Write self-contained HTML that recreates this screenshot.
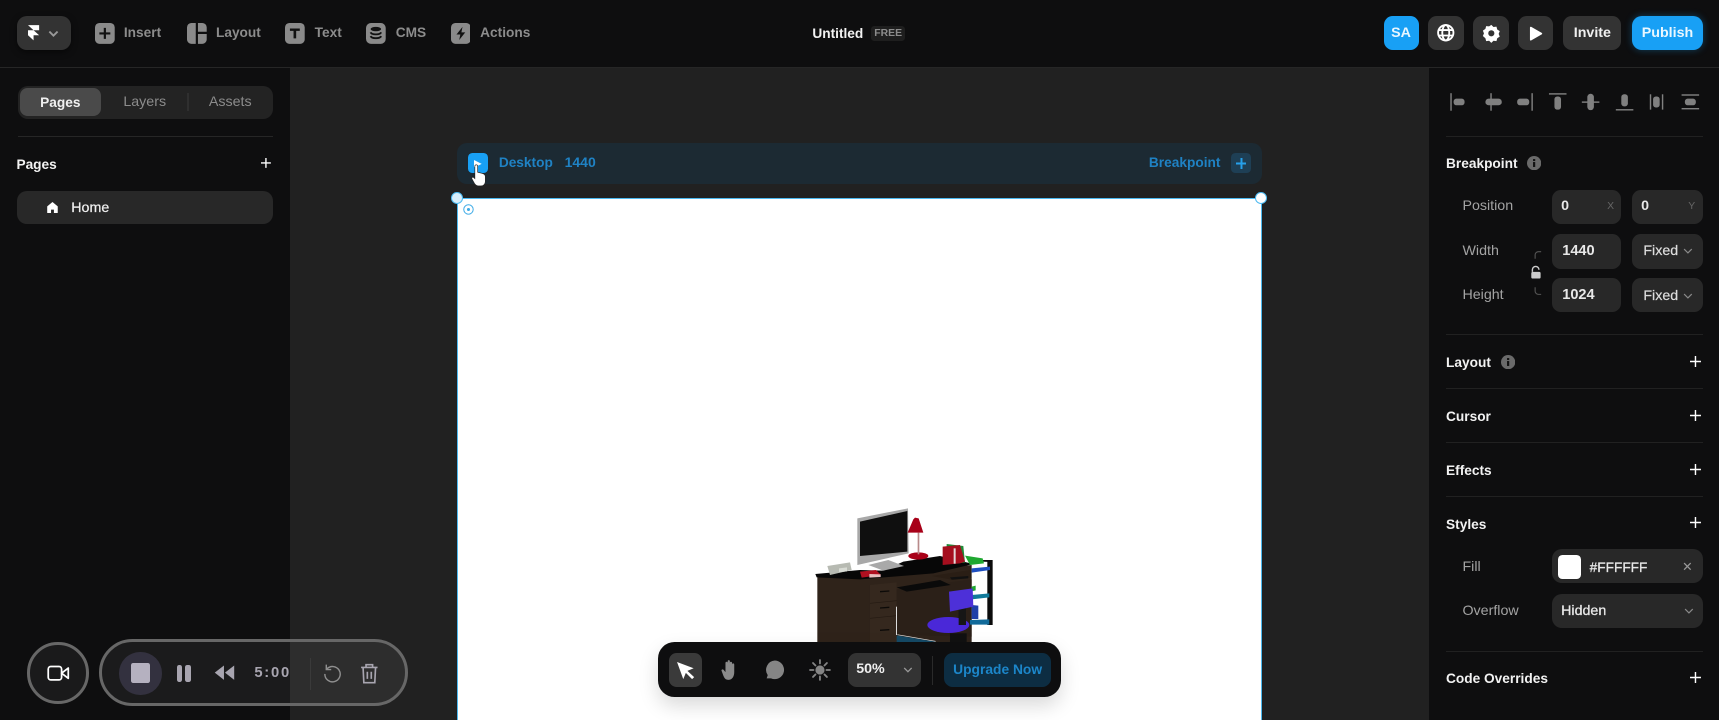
<!DOCTYPE html>
<html lang="en"><head><meta charset="utf-8"><title>Untitled</title>
<style>
html,body{margin:0;padding:0;width:1719px;height:720px;overflow:hidden;background:#0e0e0f}
#w{position:absolute;left:0;top:0;width:1568px;height:657px;overflow:hidden;zoom:1.09630;font-family:"Liberation Sans",sans-serif;background:#0e0e0f}
#w div,#w svg,#w span.t{position:absolute}
.t{height:20px;line-height:20px;font-size:13px;white-space:nowrap;display:block}
.g{color:#8c8c8c;font-weight:700;font-size:12.5px}
.h{color:#f2f2f2;font-weight:700;font-size:12.5px;margin-top:1.500px}
.l{color:#a3a3a3;font-size:13px;margin-top:1px}
.v{color:#e8e8e8;font-weight:700;font-size:13px;margin-top:1px}
.in{background:#282828;border-radius:8px}
.line{background:#212121;height:1px;left:1319px;width:234px}
.btn{background:#333;border-radius:8px}
</style></head><body>
<div id="w">
<!-- canvas -->
<div style="left:264.600px;top:62px;width:1039px;height:595px;background:#212121"></div>
<!-- top -->
<div style="left:0;top:61px;width:1568px;height:1px;background:#262626"></div>

<div style="left:15.500px;top:15px;width:49.500px;height:31px;background:#333;border-radius:9px;box-shadow:0 2px 6px rgba(0,0,0,.5)"></div>
<svg style="left:25px;top:22px" width="12" height="16" viewBox="0 0 13 17"><path d="M1 1h11v5H6.500zM1 6h5.500l5.500 5H6.500v5L1 11z" fill="#fff"/></svg>
<svg style="left:44px;top:27.500px" width="10" height="7" viewBox="0 0 12 8"><path d="M1.500 1.500L6 6l4.500-4.500" stroke="#999" stroke-width="2" fill="none"/></svg>

<svg style="left:87px;top:21px" width="18" height="19" viewBox="0 0 18 19"><rect width="18" height="19" rx="4" fill="#8a8a8a"/><path d="M9 4.500v10M4 9.500h10" stroke="#111" stroke-width="2"/></svg>
<span class="t g" style="left:113px;top:20px">Insert</span>
<svg style="left:171px;top:21px" width="18" height="19" viewBox="0 0 18 19"><path d="M4 0h4v19H4a4 4 0 0 1-4-4V4a4 4 0 0 1 4-4zM10 0h4a4 4 0 0 1 4 4v4h-8zM10 10h8v5a4 4 0 0 1-4 4h-4z" fill="#8a8a8a"/></svg>
<span class="t g" style="left:197px;top:20px">Layout</span>
<svg style="left:260px;top:21px" width="18" height="19" viewBox="0 0 18 19"><rect width="18" height="19" rx="4" fill="#8a8a8a"/><path d="M4.500 5h9v2.200h-3.300V14H7.800V7.200H4.500z" fill="#111"/></svg>
<span class="t g" style="left:287px;top:20px">Text</span>
<svg style="left:334px;top:21px" width="18" height="19" viewBox="0 0 18 19"><rect width="18" height="19" rx="4.500" fill="#8a8a8a"/><ellipse cx="9" cy="5.500" rx="4.800" ry="2" fill="#111"/><path d="M4.200 8.500c1 2.500 8.600 2.500 9.600 0M4.200 12c1 2.500 8.600 2.500 9.600 0" stroke="#111" stroke-width="1.700" fill="none"/></svg>
<span class="t g" style="left:361px;top:20px">CMS</span>
<svg style="left:411px;top:21px" width="18" height="19" viewBox="0 0 18 19"><rect width="18" height="19" rx="4" fill="#8a8a8a"/><path d="M10.500 3.500L5 10.500h3.500l-1 5 5.500-7H9.500z" fill="#111"/></svg>
<span class="t g" style="left:438px;top:20px">Actions</span>

<span class="t" style="left:741px;top:21px;color:#f2f2f2;font-weight:700;font-size:12.5px">Untitled</span>
<div style="left:794.500px;top:23.500px;width:31px;height:14px;background:#1e1e1e;border-radius:3px"></div>
<span class="t" style="left:797.500px;top:21px;color:#8c8c8c;font-weight:700;font-size:9.500px">FREE</span>

<div style="left:1262px;top:15px;width:32px;height:31px;background:#18a0f5;border-radius:8px"></div>
<span class="t" style="left:1262px;top:21px;width:32px;text-align:center;color:#e9f6ff;font-weight:700;font-size:13px">SA</span>
<div class="btn" style="left:1303px;top:15px;width:32px;height:31px"></div>
<svg style="left:1311px;top:22px" width="16" height="16" viewBox="0 0 16 16" fill="none" stroke="#fff" stroke-width="1.700"><circle cx="8" cy="8" r="7"/><ellipse cx="8" cy="8" rx="3.200" ry="7"/><path d="M1 5.500h14M1 10.500h14"/></svg>
<div class="btn" style="left:1344px;top:15px;width:32px;height:31px"></div>
<svg style="left:1351.500px;top:22px" width="17" height="17" viewBox="0 0 17 17"><path d="M8.500.8l2 1.900 2.700-.3.700 2.600 2.300 1.500-1 2.500 1 2.500-2.300 1.500-.7 2.600-2.700-.3-2 1.900-2-1.900-2.700.3-.7-2.600L.8 11l1-2.500-1-2.500 2.300-1.500.7-2.600 2.700.3z" fill="#fff"/><circle cx="8.500" cy="8.500" r="2.800" fill="#333"/></svg>
<div class="btn" style="left:1385px;top:15px;width:32px;height:31px"></div>
<svg style="left:1395px;top:23.500px" width="13" height="14" viewBox="0 0 15 15"><path d="M1 1.200c0-.8.700-1.200 1.400-.8l11 6.300c.7.400.7 1.200 0 1.600l-11 6.300c-.7.400-1.400 0-1.400-.8z" fill="#fff"/></svg>
<div class="btn" style="left:1426px;top:15px;width:53px;height:31px"></div>
<span class="t" style="left:1426px;top:21px;width:53px;text-align:center;color:#f0f0f0;font-weight:700;font-size:13px">Invite</span>
<div style="left:1489px;top:15px;width:64px;height:31px;background:#18a0f5;border-radius:9px;box-shadow:0 0 7px rgba(24,160,245,.35)"></div>
<span class="t" style="left:1489px;top:21px;width:64px;text-align:center;color:#eaf7ff;font-weight:700;font-size:13px">Publish</span>

<!-- left panel -->
<div style="left:16px;top:78px;width:233px;height:31px;background:#232323;border-radius:9px"></div>
<div style="left:18px;top:80px;width:74px;height:26px;background:#4a4a4a;border-radius:7px"></div>
<span class="t" style="left:18px;top:84px;width:74px;text-align:center;color:#f0f0f0;font-weight:700;font-size:12.5px">Pages</span>
<span class="t" style="left:92px;top:84px;width:80px;text-align:center;color:#8c8c8c;font-size:13px">Layers</span>
<div style="left:171px;top:85px;width:1px;height:16px;background:#2f2f2f"></div>
<span class="t" style="left:172px;top:84px;width:76px;text-align:center;color:#8c8c8c;font-size:13px">Assets</span>
<div style="left:16px;top:124px;width:233px;height:1px;background:#262626"></div>
<span class="t h" style="left:15px;top:139px;margin-top:0.500px;font-size:12.500px;top:140px">Pages</span>
<svg style="left:238.500px;top:144px" width="9" height="9" viewBox="0 0 10 10"><path d="M5 0v10M0 5h10" stroke="#fff" stroke-width="1.400"/></svg>
<div style="left:15.500px;top:174px;width:233.500px;height:30px;background:#282828;border-radius:9px"></div>
<svg style="left:42.500px;top:184px" width="10" height="10.500" viewBox="0 0 11 12"><path d="M5.500 0L11 4.500V11c0 .6-.4 1-1 1H7V8H4v4H1c-.6 0-1-.4-1-1V4.500z" fill="#fff"/></svg>
<span class="t" style="left:65px;top:181px;color:#f0f0f0;font-weight:400;font-size:13px;-webkit-text-stroke:.2px #f0f0f0;top:180.500px">Home</span>

<!-- breakpoint bar -->
<div style="left:417px;top:130px;width:734px;height:38px;background:#1c2a33;border-radius:9px"></div>
<div style="left:427px;top:140px;width:18px;height:18px;background:#18a0f5;border-radius:4px"></div>
<svg style="left:432.500px;top:145.500px" width="7" height="7" viewBox="0 0 8 8"><path d="M0 0l8 4-8 4z" fill="#fff"/></svg>
<span class="t" style="left:455px;top:139px;color:#1f82c4;font-weight:700;font-size:12.5px">Desktop</span>
<span class="t" style="left:515px;top:139px;color:#1f82c4;font-weight:700;font-size:12.800px">1440</span>
<span class="t" style="left:1048px;top:139px;color:#1f82c4;font-weight:700;font-size:12.5px">Breakpoint</span>
<div style="left:1123px;top:140px;width:18px;height:18px;background:#1e3f55;border-radius:4px"></div>
<svg style="left:1127px;top:144px" width="10" height="10" viewBox="0 0 10 10"><path d="M5 0v10M0 5h10" stroke="#26a0ea" stroke-width="1.800"/></svg>

<!-- frame -->
<div style="left:417px;top:181px;width:734px;height:480px;background:#fff;border:1px solid #4cb9f0;box-sizing:border-box"></div>
<div style="left:411.500px;top:175.500px;width:9px;height:9px;border-radius:50%;background:#d8eefb;border:.5px solid #4cb9f0"></div>
<div style="left:1145px;top:175.500px;width:9px;height:9px;border-radius:50%;background:#fff;border:.5px solid #4cb9f0"></div>
<svg style="left:422px;top:186px" width="10" height="10" viewBox="0 0 10 10"><circle cx="5" cy="5" r="4.300" fill="none" stroke="#3aa9e6" stroke-width=".9"/><circle cx="5" cy="5" r="1.400" fill="#3aa9e6"/></svg>

<!-- desk -->
<svg style="left:729.700px;top:447px" width="191.550" height="145.950" viewBox="0 0 630 480">
<path d="M52 262L515 225V460H52z" fill="#2f231a"/>
<path d="M210 285l80-8v180h-80z" fill="#35281e"/>
<path d="M290 298L515 268V440L290 435z" fill="#2b2018"/>
<path d="M240 303l28-2v4l-28 2zM240 352l28-2v4l-28 2zM240 419l28-2v4l-28 2z" fill="#0c0a08"/>
<path d="M210 340l80-8M210 385l80-8" stroke="#241a12" stroke-width="2"/>
<path d="M288 350v85h3v-85z" fill="#ddd"/>
<path d="M290 436l115 19v6H290z" fill="#154a66"/><path d="M292 434l115 20" stroke="#e8e8e8" stroke-width="2"/>
<path d="M46 252L180 240L250 242L310 215L420 198L520 222L400 250L180 268L50 262z" fill="#070707"/>
<path d="M290 292L420 270L452 285L320 305z" fill="#0a0a0a"/>
<path d="M395 258L510 240L515 262L460 270z" fill="#2a1e15"/>
<path d="M450 262l55-4v7l-50 4z" fill="#111"/>
<path d="M172 85L324 55L326 190L172 225z" fill="#a8a8a8"/>
<path d="M180 95L322 63L322 185L180 198z" fill="#0f0f0f"/>
<path d="M205 225L265 210L312 228L250 242z" fill="#a9a9a9"/>
<ellipse cx="355" cy="198" rx="30" ry="11" fill="#a80018"/>
<rect x="353" y="128" width="5" height="65" fill="#b88a8a"/>
<path d="M340 88L345 83L356 85L370 128L323 128z" fill="#a80018"/>
<path d="M440 162L490 168L495 218L440 222z" fill="#1f8a38"/>
<path d="M428 170L480 165L495 215L480 220L428 225z" fill="#a50e1e"/>
<path d="M461 175h6v46h-6z" fill="#e4d8d8"/>
<path d="M562 210L578 210V405H562z" fill="#0b0b0b"/>
<path d="M515 210L575 210V216L520 214z" fill="#0b0b0b"/>
<path d="M495 197L548 205L552 220L510 225z" fill="#1fa831"/>
<path d="M515 235L570 230V240L515 248z" fill="#1e4fc0"/>
<path d="M515 290l12-3v14l-12 3z" fill="#1fa831"/>
<path d="M515 315L568 310V322L515 328z" fill="#117a9a"/>
<path d="M515 345l20 2v40h-20z" fill="#1e3fa8"/>
<path d="M510 390L568 388V404H510z" fill="#116a9a"/>
<rect x="476" y="355" width="22" height="52" fill="#161616"/>
<ellipse cx="445" cy="405" rx="63" ry="24" fill="#4a28d8"/>
<path d="M447 305L518 295L520 350L450 365z" fill="#4d30d8"/>
<rect x="476" y="360" width="22" height="45" fill="#161616"/>
<rect x="450" y="430" width="50" height="30" fill="#111"/>
<path d="M82 228L150 217L155 240L90 255z" fill="#b7bab2"/>
<path d="M117 235l24-3v12l-24 3z" fill="#d8dbd4"/>
<path d="M180 245L228 240L243 255L185 263z" fill="#b01020"/>
<path d="M208 252l34 1v8l-34 2z" fill="#e8c0c0"/>
</svg>

<!-- bottom toolbar -->
<div style="left:600px;top:586px;width:368px;height:50px;background:#0e0e0f;border-radius:15px;box-shadow:0 8px 18px rgba(0,0,0,.15)"></div>
<div style="left:610px;top:596px;width:30px;height:31px;background:#3a3a3a;border-radius:7px"></div>
<svg style="left:616.500px;top:602.500px" width="18" height="18" viewBox="0 0 19 19"><path d="M1 1l16 6-6 2.500 6.500 6-2 2-6-6L7 17.500z" fill="#fff"/></svg>
<svg style="left:656.500px;top:601px" width="18" height="20" viewBox="0 0 18 20"><path d="M5 9V3.500a1 1 0 0 1 2 0V2a1 1 0 0 1 2 0v1.500a1 1 0 0 1 2 0V5a1 1 0 0 1 2 0v7c0 4-2 7-5 7-3.500 0-4-2-5-4L1.500 11c-.6-1 .8-2 1.700-1.200L5 12z" fill="#8a8a8a"/></svg>
<svg style="left:698px;top:602px" width="18" height="18" viewBox="0 0 18 18"><path d="M9 .5a8.500 8.500 0 1 1-3.500 16.300H1.500l1-3A8.500 8.500 0 0 1 9 .5z" fill="#858585"/></svg>
<svg style="left:738px;top:601px" width="20" height="20" viewBox="0 0 22 22"><circle cx="11" cy="11" r="4.600" fill="#858585"/><path d="M11 1v3.500M11 17.500V21M1 11h3.500M17.500 11H21M4 4l2.500 2.500M15.500 15.500L18 18M4 18l2.500-2.500M15.500 6.500L18 4" stroke="#858585" stroke-width="1.800" stroke-linecap="round"/></svg>
<div style="left:773.500px;top:596px;width:66.500px;height:31px;background:#333;border-radius:8px"></div>
<span class="t" style="left:781px;top:601.500px;color:#f0f0f0;font-weight:700;font-size:13px">50%</span>
<svg style="left:823.500px;top:608px" width="9" height="6" viewBox="0 0 10 7"><path d="M1 1l4 4 4-4" stroke="#999" stroke-width="1.400" fill="none"/></svg>
<div style="left:850px;top:598px;width:1px;height:27px;background:#2a2a2a"></div>
<div style="left:861px;top:596px;width:98px;height:31px;background:#0d2d42;border-radius:8px"></div>
<span class="t" style="left:861px;top:601.500px;width:98px;text-align:center;color:#1c86c9;font-weight:700;font-size:12.600px">Upgrade Now</span>

<!-- recorder -->
<div style="left:25px;top:586px;width:56px;height:56px;border-radius:50%;border:3.500px solid #676767;box-sizing:border-box;background:rgba(255,255,255,.05)"></div>
<svg style="left:42.500px;top:606.500px" width="21" height="15" viewBox="0 0 22 16"><rect x="1" y="1.500" width="13" height="13" rx="2.500" fill="none" stroke="#fff" stroke-width="1.700"/><path d="M14 8l6.500-5v10z" fill="none" stroke="#fff" stroke-width="1.700" stroke-linejoin="round"/></svg>
<div style="left:90px;top:583px;width:282px;height:61px;border-radius:31px;border:3.500px solid #676767;box-sizing:border-box;background:rgba(255,255,255,.055)"></div>
<div style="left:109px;top:595px;width:38.500px;height:38.500px;border-radius:50%;background:#33313f"></div>
<div style="left:119.500px;top:605px;width:17.500px;height:18px;border-radius:2px;background:#b5b1c0"></div>
<div style="left:161px;top:607px;width:5px;height:15px;border-radius:2px;background:#a8a5b0"></div>
<div style="left:169px;top:607px;width:5px;height:15px;border-radius:2px;background:#a8a5b0"></div>
<svg style="left:194px;top:607px" width="20" height="14" viewBox="0 0 20 15"><path d="M10 .5v14L1 7.500zM20 .5v14l-9-7z" fill="#a8a5b0"/></svg>
<span class="t" style="left:232px;top:605px;color:#a8a5b0;font-weight:700;font-size:13.500px;letter-spacing:1.600px">5:00</span>
<div style="left:283px;top:600px;width:1px;height:29px;background:#3a3a3a"></div>
<svg style="left:295px;top:605px" width="17" height="18" viewBox="0 0 17 18" fill="none" stroke="#8f8f8f" stroke-width="1.300"><path d="M3.500 5.500A7 7 0 1 1 1.700 10"/><path d="M3 1.500v4.500h4.500"/></svg>
<svg style="left:328px;top:605px" width="17" height="19" viewBox="0 0 17 19" fill="none" stroke="#a8a5b0" stroke-width="1.500"><path d="M1 4h15M5.500 4V1.500h6V4M2.800 4l.7 14h10l.7-14M6.700 8v6.500M10.300 8v6.500"/></svg>

<!-- right panel -->
<div style="left:1303.500px;top:62px;width:265px;height:595px;background:#0e0e0f"></div>
<svg style="left:1320px;top:83px" width="235" height="20" viewBox="0 0 235 20" fill="#808080">
<rect x="3" y="2" width="1.300" height="16"/><rect x="6" y="7" width="10" height="6" rx="2.500"/>
<rect x="35" y="7" width="15" height="6" rx="3"/><rect x="39.500" y="2" width="1.300" height="16"/>
<rect x="64" y="7" width="11" height="6" rx="2.500"/><rect x="77" y="2" width="1.300" height="16"/>
<rect x="93" y="2" width="16" height="1.300"/><rect x="98" y="5" width="6" height="12" rx="2.500"/>
<rect x="128" y="2.500" width="6" height="15" rx="3"/><rect x="123" y="9.500" width="16" height="1.300"/>
<rect x="159" y="3" width="6" height="11" rx="2.500"/><rect x="154" y="16.500" width="16" height="1.300"/>
<rect x="185" y="3" width="1.300" height="14"/><rect x="188" y="5" width="6" height="10" rx="2.500"/><rect x="196" y="3" width="1.300" height="14"/>
<rect x="214" y="3" width="16" height="1.300"/><rect x="217" y="7" width="10" height="6" rx="2.500"/><rect x="214" y="15.500" width="16" height="1.300"/>
</svg>
<div class="line" style="top:124px"></div>

<span class="t h" style="left:1319px;top:138px">Breakpoint</span>
<svg style="left:1393px;top:142px" width="13" height="13" viewBox="0 0 13 13"><circle cx="6.500" cy="6.500" r="6.500" fill="#6a6a6a"/><rect x="5.500" y="5.500" width="2" height="4.500" fill="#111"/><rect x="5.500" y="2.800" width="2" height="1.800" fill="#111"/></svg>
<span class="t l" style="left:1334px;top:178px">Position</span>
<div class="in" style="left:1416px;top:173px;width:63px;height:31px"></div>
<span class="t v" style="left:1424px;top:178px">0</span>
<span class="t" style="left:1466px;top:179px;color:#666;font-size:9.500px">X</span>
<div class="in" style="left:1489px;top:173px;width:64px;height:31px"></div>
<span class="t v" style="left:1497px;top:178px">0</span>
<span class="t" style="left:1540px;top:179px;color:#666;font-size:9.500px">Y</span>

<span class="t l" style="left:1334px;top:219px">Width</span>
<div class="in" style="left:1416px;top:213px;width:63px;height:32px"></div>
<span class="t v" style="left:1425px;top:219px;font-size:13.300px">1440</span>
<div class="in" style="left:1489px;top:213px;width:64px;height:32px"></div>
<span class="t" style="left:1499px;top:220px;color:#ddd;font-size:13px;-webkit-text-stroke:.2px #ddd">Fixed</span>
<svg style="left:1535px;top:226px" width="9" height="6" viewBox="0 0 9 6"><path d="M1 1l3.500 3.500L8 1" stroke="#8a8a8a" stroke-width="1.100" fill="none"/></svg>
<span class="t l" style="left:1334px;top:259px">Height</span>
<div class="in" style="left:1416px;top:254px;width:63px;height:31px"></div>
<span class="t v" style="left:1425px;top:259px;font-size:13.300px">1024</span>
<div class="in" style="left:1489px;top:254px;width:64px;height:31px"></div>
<span class="t" style="left:1499px;top:261px;color:#ddd;font-size:13px;-webkit-text-stroke:.2px #ddd">Fixed</span>
<svg style="left:1535px;top:267px" width="9" height="6" viewBox="0 0 9 6"><path d="M1 1l3.500 3.500L8 1" stroke="#8a8a8a" stroke-width="1.100" fill="none"/></svg>
<svg style="left:1394px;top:228px" width="14" height="42" viewBox="0 0 14 42" fill="none"><path d="M12 1.500H9.500a3 3 0 0 0-3 3V8M12 40.500H9.500a3 3 0 0 1-3-3V34" stroke="#555" stroke-width="1"/><path d="M4 20v-2a3 3 0 0 1 6 0" stroke="#ccc" stroke-width="1.300"/><rect x="3" y="20" width="8.500" height="6" rx="1.300" fill="#ccc"/></svg>

<div class="line" style="top:305px"></div>
<span class="t h" style="left:1319px;top:320px">Layout</span>
<svg style="left:1369px;top:324px" width="13" height="13" viewBox="0 0 13 13"><circle cx="6.500" cy="6.500" r="6.500" fill="#6a6a6a"/><rect x="5.500" y="5.500" width="2" height="4.500" fill="#111"/><rect x="5.500" y="2.800" width="2" height="1.800" fill="#111"/></svg>
<svg style="left:1541.500px;top:325px" width="10" height="10" viewBox="0 0 10 10"><path d="M5 0v10M0 5h10" stroke="#fff" stroke-width="1.300"/></svg>
<div class="line" style="top:354px"></div>
<span class="t h" style="left:1319px;top:369px">Cursor</span>
<svg style="left:1541.500px;top:374px" width="10" height="10" viewBox="0 0 10 10"><path d="M5 0v10M0 5h10" stroke="#fff" stroke-width="1.300"/></svg>
<div class="line" style="top:403px"></div>
<span class="t h" style="left:1319px;top:418px">Effects</span>
<svg style="left:1541.500px;top:423px" width="10" height="10" viewBox="0 0 10 10"><path d="M5 0v10M0 5h10" stroke="#fff" stroke-width="1.300"/></svg>
<div class="line" style="top:452px"></div>
<span class="t h" style="left:1319px;top:467px">Styles</span>
<svg style="left:1541.500px;top:472px" width="10" height="10" viewBox="0 0 10 10"><path d="M5 0v10M0 5h10" stroke="#fff" stroke-width="1.300"/></svg>

<span class="t l" style="left:1334px;top:507px">Fill</span>
<div class="in" style="left:1416px;top:501px;width:137px;height:31px;border-radius:9px"></div>
<div style="left:1421px;top:506px;width:21px;height:22px;background:#fff;border-radius:4px"></div>
<span class="t v" style="left:1450px;top:507px;font-weight:400;font-size:12.500px;-webkit-text-stroke:.25px #e8e8e8">#FFFFFF</span>
<svg style="left:1535px;top:513px" width="8" height="8" viewBox="0 0 8 8"><path d="M1 1l6 6M7 1L1 7" stroke="#999" stroke-width="1.200"/></svg>
<span class="t l" style="left:1334px;top:547px">Overflow</span>
<div class="in" style="left:1416px;top:542px;width:137px;height:31px;border-radius:9px"></div>
<span class="t v" style="left:1424px;top:547px;font-weight:400;-webkit-text-stroke:.25px #e8e8e8">Hidden</span>
<svg style="left:1536px;top:555px" width="9" height="6" viewBox="0 0 9 6"><path d="M1 1l3.500 3.500L8 1" stroke="#8a8a8a" stroke-width="1.100" fill="none"/></svg>
<div class="line" style="top:594px"></div>
<span class="t h" style="left:1319px;top:608px">Code Overrides</span>
<svg style="left:1541.500px;top:613px" width="10" height="10" viewBox="0 0 10 10"><path d="M5 0v10M0 5h10" stroke="#fff" stroke-width="1.300"/></svg>

<!-- hand cursor over -->
<svg style="left:429.500px;top:149.500px" width="14" height="21" viewBox="0 0 14 21"><path d="M3.500 2a1.300 1.300 0 0 1 2.600 0v5.500l4 1c2 .5 3 1.300 3 3V16c0 2-1.500 4-4 4H6.500c-1.500 0-2.500-1-3.200-2L.8 13.500c-.5-1 .8-2 1.700-1.200l1 1z" fill="#fff" stroke="#222" stroke-width=".6"/></svg>
</div>
</body></html>
